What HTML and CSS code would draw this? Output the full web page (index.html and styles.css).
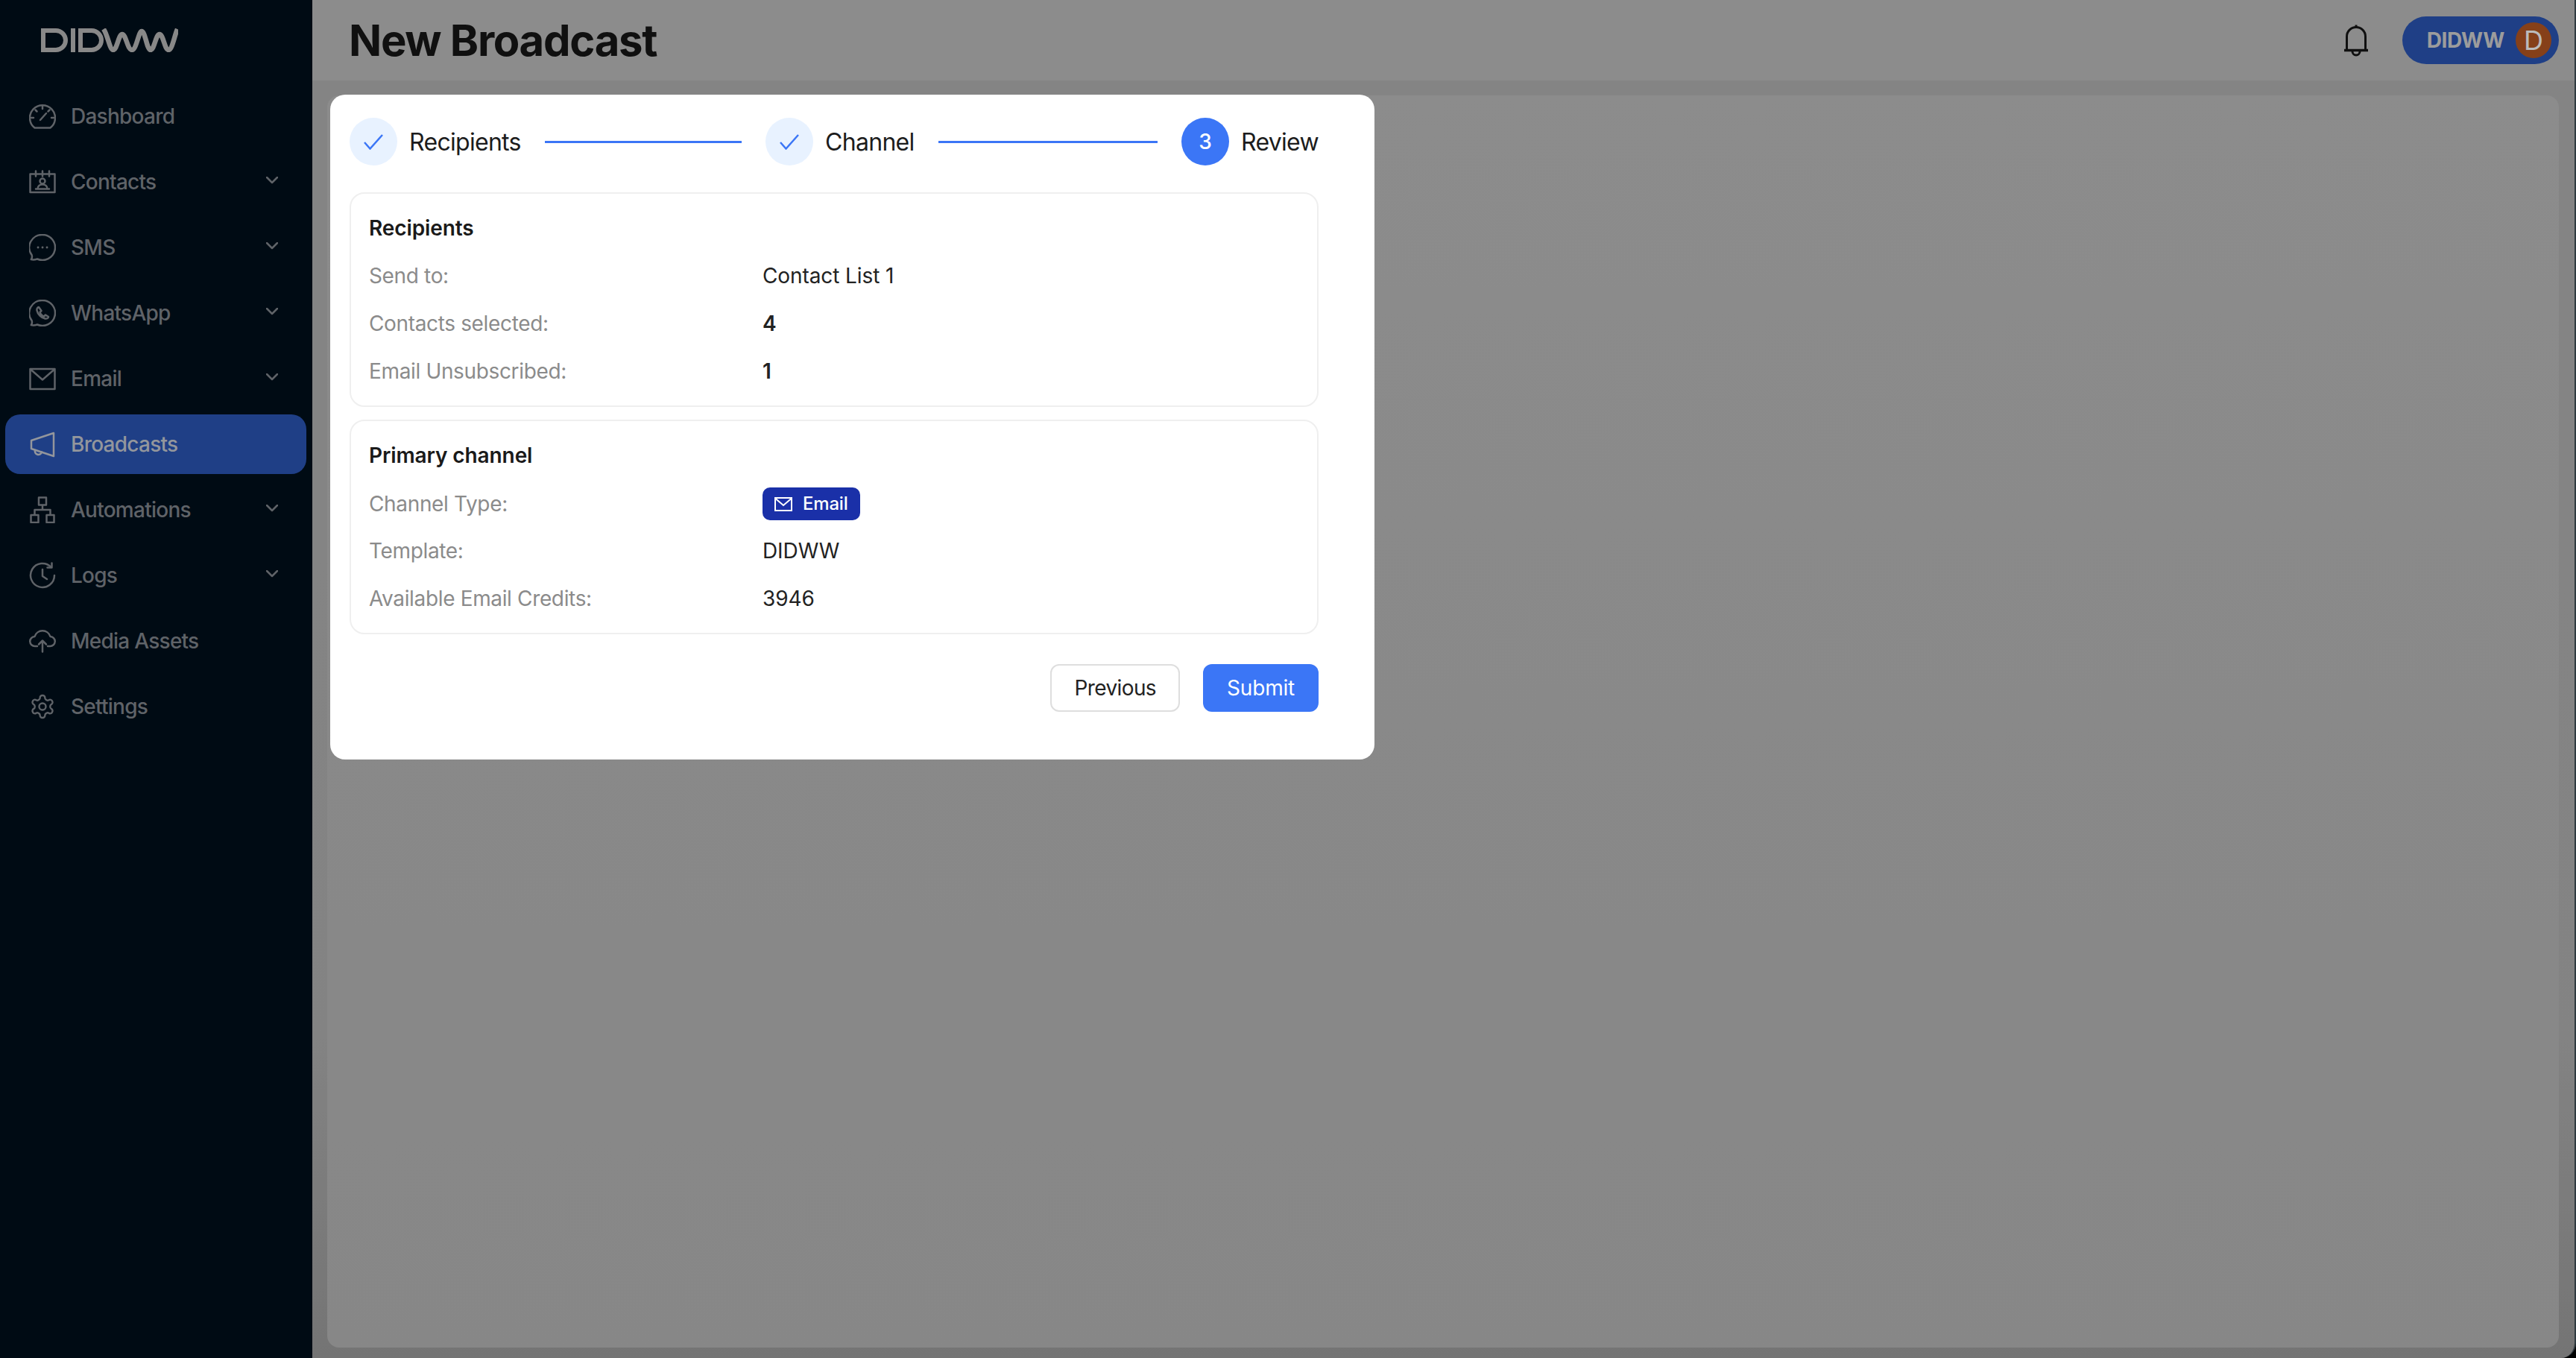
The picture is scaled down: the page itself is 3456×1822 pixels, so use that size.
FILE: index.html
```html
<!DOCTYPE html>
<html lang="en">
<head>
<meta charset="utf-8">
<title>New Broadcast</title>
<link rel="stylesheet" href="styles.css">
</head>
<body>
<div class="app">
  <aside class="sidebar">
    <div class="brand">
      <svg class="logo" viewBox="0 0 184 32" fill="none" stroke="currentColor" stroke-width="6" role="img" aria-label="DIDWW">
        <path d="M3 3h17a13 13 0 0 1 0 26H3z"/>
        <path d="M43 0v32"/>
        <path d="M53 3h15a13 13 0 0 1 0 26H53z"/>
        <path d="M84 1C90 10 92 29 97 29C102 29 104 8 109 8C114 8 116 29 122 29C128 29 131 4 135 4C140 4 142 29 147 29C152 29 154 8 159 8C164 8 166 29 171 29C176 29 179 10 183 1" stroke-width="6.500"/>
      </svg>
    </div>
    <nav class="nav">
      <a class="nav-item">
        <svg class="nav-icon" viewBox="0 0 36 36"><path d="M7.500 33.500a17 17 0 1 1 21 0z"/><path d="M18 5v3M8.500 9.500l2 2M3 20h3M30 20h3M27.500 9.500l-2 2M15 23l8-9"/></svg>
        <span class="nav-label">Dashboard</span>
      </a>
      <a class="nav-item">
        <svg class="nav-icon" viewBox="0 0 36 36"><path d="M1.500 7.500h33V32h-33z"/><path d="M9 3.500v7M18 3.500v7M27 3.500v7"/><circle cx="18" cy="17" r="3.500"/><path d="M11.500 27.500c0-4 3-6 6.500-6s6.500 2 6.500 6M9 27.500h18"/></svg>
        <span class="nav-label">Contacts</span>
        <svg class="chevron" viewBox="0 0 16 10"><path d="M1 1l7 7 7-7"/></svg>
      </a>
      <a class="nav-item">
        <svg class="nav-icon" viewBox="0 0 36 36"><path d="M18 1a17 17 0 1 1-7 32.500c-3 1-6 1.200-8.200.6 1-1.400 1.400-4 .8-6A17 17 0 0 1 18 1z"/><path d="M12 18h.1M18 18h.1M24 18h.1" stroke-width="2.800"/></svg>
        <span class="nav-label">SMS</span>
        <svg class="chevron" viewBox="0 0 16 10"><path d="M1 1l7 7 7-7"/></svg>
      </a>
      <a class="nav-item">
        <svg class="nav-icon" viewBox="0 0 36 36"><path d="M18 1a17 17 0 1 1-7 32.500c-3 1-6 1.200-8.200.6 1-1.400 1.400-4 .8-6A17 17 0 0 1 18 1z"/><path d="M13 10c-1.500 0-3 2-2.500 4.500 1 5 6 10 11 11 2.500.5 4.500-1 4.500-2.500l-4-2.500-2 2c-2-.5-5-3.500-5.500-5.500l2-2z"/></svg>
        <span class="nav-label">WhatsApp</span>
        <svg class="chevron" viewBox="0 0 16 10"><path d="M1 1l7 7 7-7"/></svg>
      </a>
      <a class="nav-item">
        <svg class="nav-icon" viewBox="0 0 36 36"><path d="M1.500 5h33v27h-33z"/><path d="M2.500 6L18 19.500 33.500 6"/></svg>
        <span class="nav-label">Email</span>
        <svg class="chevron" viewBox="0 0 16 10"><path d="M1 1l7 7 7-7"/></svg>
      </a>
      <a class="nav-item active">
        <svg class="nav-icon" viewBox="0 0 36 36"><path d="M33 3L3 13v11l30 10z"/><path d="M8 26a4.500 4.500 0 0 0 9 2.500"/></svg>
        <span class="nav-label">Broadcasts</span>
      </a>
      <a class="nav-item">
        <svg class="nav-icon" viewBox="0 0 36 36"><path d="M13 1.500h10v10H13zM2.500 25h10v10h-10zM23.500 25h10v10h-10zM18 11.500V18M7.500 25v-7h21v7"/></svg>
        <span class="nav-label">Automations</span>
        <svg class="chevron" viewBox="0 0 16 10"><path d="M1 1l7 7 7-7"/></svg>
      </a>
      <a class="nav-item">
        <svg class="nav-icon" viewBox="0 0 36 36"><path d="M34 18a16 16 0 1 1-4.500-11.200"/><path d="M30.500 1.500V7.500h-6M18 10v9l6 4"/></svg>
        <span class="nav-label">Logs</span>
        <svg class="chevron" viewBox="0 0 16 10"><path d="M1 1l7 7 7-7"/></svg>
      </a>
      <a class="nav-item">
        <svg class="nav-icon" viewBox="0 0 36 36"><path d="M11 25H8a6.500 6.500 0 0 1-.5-13 11 11 0 0 1 21 0 6.500 6.500 0 0 1-.5 13h-3"/><path d="M18 32.500V18M13 22.500l5-5 5 5"/></svg>
        <span class="nav-label">Media Assets</span>
      </a>
      <a class="nav-item">
        <svg class="nav-icon" viewBox="0 0 24 24"><path class="thin" d="M12.220 2h-.44a2 2 0 0 0-2 2v.18a2 2 0 0 1-1 1.730l-.43.250a2 2 0 0 1-2 0l-.15-.08a2 2 0 0 0-2.730.730l-.22.380a2 2 0 0 0 .730 2.730l.15.100a2 2 0 0 1 1 1.720v.510a2 2 0 0 1-1 1.740l-.15.090a2 2 0 0 0-.730 2.730l.22.380a2 2 0 0 0 2.730.730l.15-.08a2 2 0 0 1 2 0l.43.250a2 2 0 0 1 1 1.730V20a2 2 0 0 0 2 2h.44a2 2 0 0 0 2-2v-.18a2 2 0 0 1 1-1.730l.43-.25a2 2 0 0 1 2 0l.15.08a2 2 0 0 0 2.730-.73l.22-.39a2 2 0 0 0-.73-2.730l-.15-.08a2 2 0 0 1-1-1.740v-.5a2 2 0 0 1 1-1.740l.15-.09a2 2 0 0 0 .73-2.730l-.22-.38a2 2 0 0 0-2.730-.73l-.15.08a2 2 0 0 1-2 0l-.43-.25a2 2 0 0 1-1-1.730V4a2 2 0 0 0-2-2z"/><circle class="thin" cx="12" cy="12" r="3"/></svg>
        <span class="nav-label">Settings</span>
      </a>
    </nav>
  </aside>

  <main class="main">
    <header class="topbar">
      <h1 class="page-title">New Broadcast</h1>
      <div class="top-actions">
        <svg class="bell" viewBox="0 0 34 44" fill="none" stroke="currentColor" stroke-width="3"><path d="M4.500 35V17a12.500 12.500 0 0 1 25 0v18"/><path d="M1 35.500h32" stroke-width="3.500"/><path d="M12 37a5 5 0 0 0 10 0"/><path d="M17 1.500v3"/></svg>
        <div class="user-pill">
          <span class="user-name">DIDWW</span>
          <span class="avatar">D</span>
        </div>
      </div>
    </header>
    <section class="content">
      <div class="content-card"></div>
    </section>
  </main>

  <div class="backdrop"></div>

  <div class="modal">
    <ol class="stepper">
      <li class="step">
        <span class="step-dot done"><svg class="check" viewBox="0 0 26 21"><path d="M1 11l7.500 8.500L25 1"/></svg></span>
        <span class="step-label">Recipients</span>
        <span class="step-line"></span>
      </li>
      <li class="step">
        <span class="step-dot done"><svg class="check" viewBox="0 0 26 21"><path d="M1 11l7.500 8.500L25 1"/></svg></span>
        <span class="step-label">Channel</span>
        <span class="step-line"></span>
      </li>
      <li class="step last">
        <span class="step-dot current">3</span>
        <span class="step-label">Review</span>
      </li>
    </ol>

    <section class="panel">
      <h2 class="panel-title">Recipients</h2>
      <div class="row"><span class="row-label">Send to:</span><span class="row-value">Contact List 1</span></div>
      <div class="row"><span class="row-label">Contacts selected:</span><span class="row-value strong">4</span></div>
      <div class="row"><span class="row-label">Email Unsubscribed:</span><span class="row-value strong">1</span></div>
    </section>

    <section class="panel">
      <h2 class="panel-title">Primary channel</h2>
      <div class="row row-tight"><span class="row-label">Channel Type:</span>
        <span class="row-value"><span class="badge"><svg class="badge-icon" viewBox="0 0 24 19"><path d="M1 1h22v17H1z"/><path d="M1.500 2l10.500 9L22.500 2"/></svg>Email</span></span>
      </div>
      <div class="row row-loose"><span class="row-label">Template:</span><span class="row-value">DIDWW</span></div>
      <div class="row"><span class="row-label">Available Email Credits:</span><span class="row-value">3946</span></div>
    </section>

    <div class="actions">
      <button class="btn btn-ghost" type="button">Previous</button>
      <button class="btn btn-primary" type="button">Submit</button>
    </div>
  </div>
</div>
</body>
</html>
```
FILE: styles.css
```css
* { box-sizing: border-box; }
html, body { margin: 0; height: 100%; }
body {
  background: #000;
  font-family: Inter, "Liberation Sans", sans-serif;
  overflow: hidden;
}
.app {
  position: relative;
  display: flex;
  height: 1822px;
  width: 3456px;
  overflow: hidden;
  border-right: 2px solid #2f3a40;
  border-bottom-right-radius: 20px;
}

/* Sidebar */
.sidebar {
  flex: 0 0 419px;
  background: #010e19;
  padding: 38px 8px 0 7px;
  color: #777c82;
}
.brand { height: 32px; margin-bottom: 46px; padding-left: 48px; color: #aaaaaa; }
.logo { display: block; width: 184px; height: 32px; }
.nav { display: flex; flex-direction: column; gap: 8px; }
.nav-item {
  display: flex;
  align-items: center;
  height: 80px;
  padding: 0 38px 0 32px;
  border-radius: 20px;
  font-size: 28px;
  font-weight: 500;
  letter-spacing: -.75px;
}
.nav-item.active { background: #274fa8; color: #b8bcc4; }
.nav-icon {
  flex: none;
  width: 36px;
  height: 36px;
  margin-right: 20px;
  fill: none;
  stroke: currentColor;
  stroke-width: 2.5;
  stroke-linecap: round;
  stroke-linejoin: round;
}
.nav-icon .thin { stroke-width: 1.6; }
.nav-label { flex: 1; }
.chevron {
  flex: none;
  width: 16px;
  height: 10px;
  margin-bottom: 4px;
  fill: none;
  stroke: currentColor;
  stroke-width: 2.5;
  stroke-linecap: round;
  stroke-linejoin: round;
}

/* Main */
.main { flex: 1; display: flex; flex-direction: column; min-width: 0; }
.topbar {
  flex: 0 0 108px;
  display: flex;
  align-items: center;
  justify-content: space-between;
  padding: 0 21px 0 49px;
  background: #b0b0b0;
}
.page-title {
  margin: 0;
  font-size: 58px;
  line-height: 1;
  font-weight: 700;
  letter-spacing: -1.3px;
  color: #151515;
}
.top-actions { display: flex; align-items: center; gap: 45px; }
.bell { width: 34px; height: 44px; color: #151515; }
.user-pill {
  display: flex;
  align-items: center;
  height: 64px;
  padding: 0 10px 0 33px;
  gap: 15px;
  border-radius: 32px;
  background: #274fa8;
}
.user-name { font-size: 28px; font-weight: 700; letter-spacing: -.4px; color: #c4c4c4; }
.avatar {
  display: flex;
  align-items: center;
  justify-content: center;
  width: 48px;
  height: 48px;
  border-radius: 50%;
  background: #a85120;
  color: #eaeaea;
  font-size: 36px;
}
.content {
  flex: 1;
  display: flex;
  padding: 20px 21px 14px 20px;
  background: linear-gradient(#a6a6a6 0, #a4a4a4 75%, #929292 100%);
}
.content-card {
  flex: 1;
  border-radius: 16px;
  background: linear-gradient(#afafaf, #a9a9a9);
}

/* Modal */
.backdrop {
  position: absolute;
  inset: 0;
  background: rgba(0, 0, 0, .2);
}
.modal {
  position: absolute;
  left: 443px;
  top: 127px;
  width: 1401px;
  height: 892px;
  padding: 31px 75px 0 26px;
  border-radius: 20px;
  background: #fff;
  color: #222;
}
.stepper {
  display: flex;
  margin: 0 0 36px;
  padding: 0;
  list-style: none;
}
.step { flex: 1; display: flex; align-items: center; }
.step.last { flex: none; }
.step-dot {
  flex: none;
  display: flex;
  align-items: center;
  justify-content: center;
  width: 64px;
  height: 64px;
  border-radius: 50%;
  font-size: 28px;
  font-weight: 500;
}
.step-dot.done { background: #e8f2ff; }
.step-dot.current { background: #3b76f6; color: #fff; }
.check {
  width: 26px;
  height: 21px;
  fill: none;
  stroke: #3b76f6;
  stroke-width: 2.5;
}
.step-label { margin-left: 16px; font-size: 32px; letter-spacing: -.7px; color: #1c1c1c; }
.step-line { flex: 1; height: 3px; margin: 0 32px; background: #3b76f6; }

.panel {
  margin-bottom: 17px;
  padding: 26px 24px 26px;
  border: 2px solid #efefef;
  border-radius: 20px;
}
.panel-title {
  margin: 0;
  font-size: 28px;
  line-height: 40px;
  font-weight: 600;
  letter-spacing: -.1px;
  color: #1a1a1a;
}
.row {
  display: grid;
  grid-template-columns: 528px 1fr;
  align-items: center;
  height: 40px;
  margin-top: 24px;
  font-size: 28px;
  line-height: 40px;
}
.row-tight { margin-top: 23px; }
.row-loose { margin-top: 25px; }
.row-label { color: #8b8b8b; letter-spacing: -.35px; }
.row-value { color: #222; letter-spacing: -.1px; }
.row-value.strong { font-weight: 600; }
.badge {
  display: inline-flex;
  align-items: center;
  height: 44px;
  gap: 14px;
  padding: 0 16px;
  border-radius: 10px;
  background: #1a30a8;
  color: #fff;
  font-size: 24px;
  font-weight: 500;
  letter-spacing: -.2px;
  vertical-align: middle;
}
.badge-icon {
  width: 24px;
  height: 19px;
  fill: none;
  stroke: #fff;
  stroke-width: 2;
}

.actions {
  display: flex;
  justify-content: flex-end;
  gap: 31px;
  margin-top: 40px;
}
.btn {
  height: 64px;
  padding: 0 32px;
  border-radius: 12px;
  font: 400 28px Inter, "Liberation Sans", sans-serif;
  letter-spacing: -.2px;
}
.btn-ghost { padding: 0 30px; background: #fff; border: 2px solid #dedede; color: #222; letter-spacing: -.6px; }
.btn-primary { background: #3b76f6; border: 0; color: #fff; }
```
